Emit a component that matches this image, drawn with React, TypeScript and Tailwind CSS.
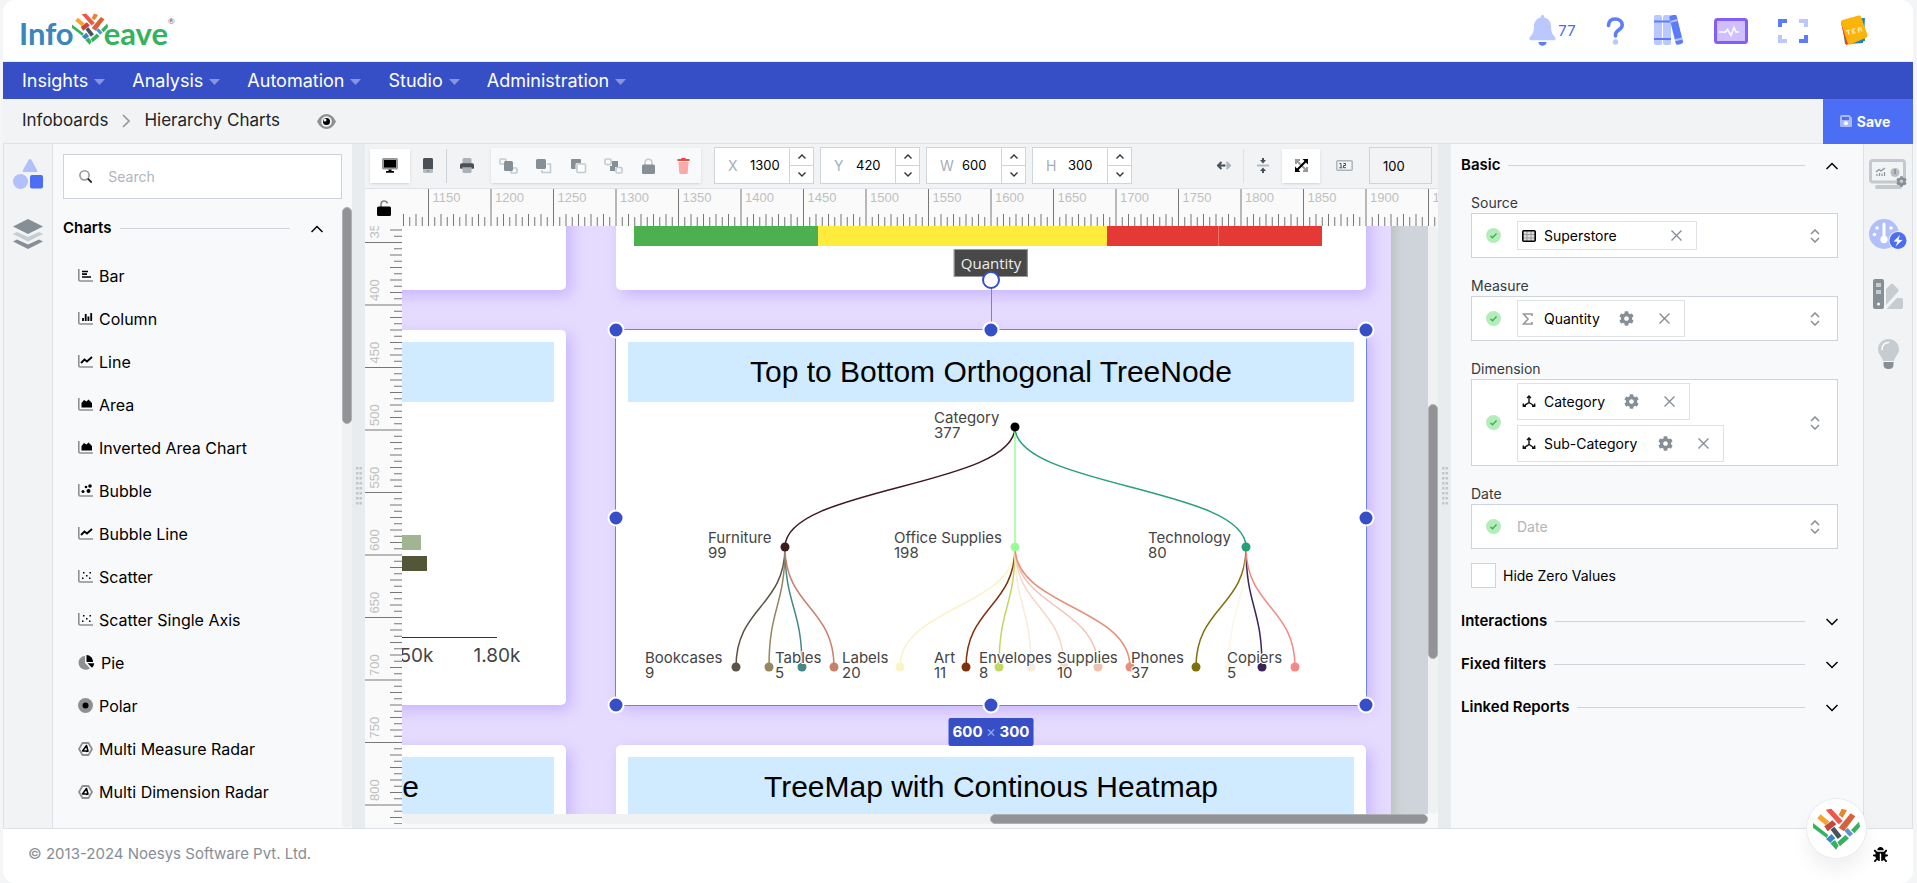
import type { ReactNode } from 'react'
import { FaBug, FaCog } from 'react-icons/fa'

const NAV_ITEMS = ['Insights', 'Analysis', 'Automation', 'Studio', 'Administration']

const CHART_TYPES = [
  { label: 'Bar', icon: 'bar' },
  { label: 'Column', icon: 'column' },
  { label: 'Line', icon: 'line' },
  { label: 'Area', icon: 'area' },
  { label: 'Inverted Area Chart', icon: 'area' },
  { label: 'Bubble', icon: 'bubble' },
  { label: 'Bubble Line', icon: 'line' },
  { label: 'Scatter', icon: 'scatter' },
  { label: 'Scatter Single Axis', icon: 'scatter' },
  { label: 'Pie', icon: 'pie' },
  { label: 'Polar', icon: 'polar' },
  { label: 'Multi Measure Radar', icon: 'radar' },
  { label: 'Multi Dimension Radar', icon: 'radar' },
]

// Canvas zoom and the board coordinate at the viewport's top left corner
const ZOOM = 1.25
const ORIGIN_X = 1128.8
const ORIGIN_Y = 336.8
const toX = (v: number) => Math.round((v - ORIGIN_X) * ZOOM)
const toY = (v: number) => Math.round((v - ORIGIN_Y) * ZOOM)

const range = (from: number, to: number, step: number) =>
  Array.from({ length: Math.floor((to - from) / step) + 1 }, (_, i) => from + i * step)

/* ---------- Logo ---------- */

function WeaveMark({ className }: { className: string }) {
  return (
    <svg viewBox="0 0 141 124" className={className} aria-hidden="true">
      <path fill="#f6a32b" d="M13 30 23 18 49 40 38 51z" />
      <path fill="#ef5549" d="M38 4 55 1 89 38 77 48z" />
      <path fill="#e08a2e" d="M86 1 102 6 89 28 77 20z" />
      <path fill="#d9613a" d="M113 15 127 24 93 69 77 58z" />
      <path fill="#c9453b" d="M34 54 58 36 70 48 44 69z" />
      <path fill="#47525f" d="M53 64 64 55 86 83 74 92z" />
      <path fill="#36b25f" d="M0 44 46 80 41 89 0 58z" />
      <path fill="#3f83c4" d="M39 92 56 77 67 90 52 103z" />
      <path fill="#36b25f" d="M52 105 66 95 77 112 69 124z" />
      <path fill="#36b25f" d="M73 102 97 80 108 90 81 114z" />
      <path fill="#5c93d1" d="M94 67 104 59 120 76 110 85z" />
      <path fill="#36b25f" d="M114 65 138 40 141 55 124 75z" />
    </svg>
  )
}

function Logo() {
  return (
    <a href="#" className="flex items-start font-['Lato'] text-[31px] leading-[34px] font-bold">
      <span className="mt-1 text-[#3a87bd]">Info</span>
      <WeaveMark className="-mr-1 -ml-0.5 h-[34px] w-9" />
      <span className="mt-1 text-[#36b25f]">eave</span>
      <span className="mt-1 text-[8px] leading-[10px] font-normal text-[#555]">®</span>
    </a>
  )
}

/* ---------- Header icons ---------- */

function HeaderIcons() {
  return (
    <div className="flex items-center">
      <button className="flex items-center gap-[2px]" aria-label="Notifications">
        <svg width="27" height="31" viewBox="0 0 27 31">
          <path
            fill="#bac8ff"
            d="M13.500 0c1 0 1.700.7 1.700 1.700v.8c4 .8 6.800 4.200 6.800 8.500 0 6 1.500 8.500 4 11 1.300 1.300.5 3.300-1.300 3.300H2.300C.5 25.300-.3 23.300 1 22c2.500-2.500 4-5 4-11 0-4.300 2.800-7.700 6.800-8.500v-.8c0-1 .7-1.700 1.700-1.700z"
          />
          <path fill="#5c7cfa" d="M9.500 27h8c0 2.200-1.800 3.800-4 3.800s-4-1.600-4-3.800z" />
        </svg>
        <span className="w-[18px] text-[15px] leading-5 text-[#4c6ef5]">77</span>
      </button>
      <button className="ml-7" aria-label="Help">
        <svg width="22" height="28" viewBox="0 0 22 28" fill="none">
          <path
            d="M4.500 8.500C4.500 4.500 7 2 11 2s7.200 2.500 7.200 6c0 5-6.700 5-6.700 9.500v1.500"
            stroke="#5c7cfa"
            strokeWidth="3.600"
            strokeLinecap="round"
          />
          <circle cx="11.500" cy="25" r="2.700" fill="#bac8ff" />
        </svg>
      </button>
      <button className="ml-7" aria-label="Library">
        <svg width="31" height="31" viewBox="0 0 31 31">
          <rect width="8" height="30" rx="2" fill="#bac8ff" />
          <rect x="9" width="8" height="30" rx="2" fill="#bac8ff" />
          <path d="M0 5.500h17v2H0zM0 23h17v2H0z" fill="#5c7cfa" />
          <g transform="rotate(-14 21 15)">
            <rect x="18.500" y="0" width="7.500" height="30" rx="2" fill="#5c7cfa" />
            <path d="M18.500 5h7.500v2h-7.500zM18.500 24h7.500v2h-7.500z" fill="#bac8ff" />
          </g>
        </svg>
      </button>
      <button className="ml-[29px]" aria-label="Monitor">
        <svg width="34" height="26" viewBox="0 0 34 26" fill="none">
          <rect x="1.500" y="1.500" width="31" height="23" rx="2" fill="#d0bfff" stroke="#845ef7" strokeWidth="3" />
          <path d="M5 14h6.500l2-2.500 3.500 6 3-8 2 4.500h3" stroke="#fff" strokeWidth="1.600" />
        </svg>
      </button>
      <button className="ml-[30px]" aria-label="Full screen">
        <svg width="30" height="24" viewBox="0 0 30 24" fill="none" strokeWidth="4">
          <path d="M2 8V2h7" stroke="#5c7cfa" />
          <path d="M21 2h7v6" stroke="#bac8ff" />
          <path d="M2 16v6h7" stroke="#bac8ff" />
          <path d="M21 22h7v-6" stroke="#5c7cfa" />
        </svg>
      </button>
      <button className="ml-8" aria-label="Profile">
        <svg width="28" height="31" viewBox="0 0 28 31">
          <path d="M2 6 24 3l1 23-20 3z" fill="#1c9c5b" />
          <path d="M8 6 25 3l-2 25-14 1z" fill="#1e7fc2" />
          <path d="M1 8 4 6l8 22-6 2z" fill="#e2452f" />
          <path d="M1 7.500Q.5 5.500 2.500 5L18.500.5q2-.5 2.500 1.200L27.500 20q.5 2-1.500 2.800L10.500 29.500q-2 .7-2.800-1.300z" fill="#fbb40a" />
          <path d="m6 16 4-1m-2 .5 1 4m3-5 1 4m-1-4 3-1m-2.500 3 2-.5m-1.500 2.500 3-1m2-4 1 4m-1-4 3-1 1 4m-4-1 3-1" stroke="#fde9b4" strokeWidth="1.200" fill="none" />
        </svg>
      </button>
    </div>
  )
}

/* ---------- Small shared icons ---------- */

function Chevron({ up = false }: { up?: boolean }) {
  return (
    <svg width="12" height="8" viewBox="0 0 12 8" fill="none" stroke="#000" strokeWidth="1.500">
      <path d={up ? 'M.5 7 6 1.500 11.500 7' : 'M.5 1 6 6.500 11.500 1'} />
    </svg>
  )
}

function ChartIcon({ kind }: { kind: string }) {
  if (kind === 'pie') {
    return (
      <svg width="17" height="15" viewBox="0 0 17 15">
        <path d="M7 .8V8l5 5.200A7 7 0 1 1 7 .8z" fill="#909090" />
        <path d="M8.500 0A7 7 0 0 1 15.200 7H8.500z" />
        <path d="M9.500 8.300h6.700a7 7 0 0 1-2.200 4.500z" />
      </svg>
    )
  }
  if (kind === 'polar') {
    return (
      <svg width="15" height="15" viewBox="0 0 15 15">
        <circle cx="7.500" cy="7.500" r="7.500" fill="#909090" />
        <circle cx="7.500" cy="7.500" r="3" />
      </svg>
    )
  }
  if (kind === 'radar') {
    return (
      <svg width="15" height="14" viewBox="0 0 15 14" fill="none">
        <path d="M4.500 1h6L14 7l-3.500 6h-6L1 7z" stroke="#909090" strokeWidth="1.800" strokeLinejoin="round" />
        <path d="M8.500 3.500 4.500 9h5.500zM8 9.500l2.500-.5" stroke="#000" strokeWidth="1.500" strokeLinejoin="round" />
      </svg>
    )
  }
  return (
    <svg width="15" height="13" viewBox="0 0 15 13" fill="none">
      <path d="M.8 0v10.500q0 1.500 1.500 1.500H15" stroke="#909090" strokeWidth="1.600" />
      {kind === 'bar' && <path d="M4 2.500h6M4 5.200h5M4 8h9" stroke="#000" strokeWidth="1.700" />}
      {kind === 'column' && <path d="M5 9V6M7.700 9V2M10.400 9V4.500M13.200 9V1" stroke="#000" strokeWidth="1.800" />}
      {kind === 'line' && <path d="m3 8 3.500-3.500 2.500 2L14 2" stroke="#000" strokeWidth="1.800" />}
      {kind === 'area' && <path d="M3.500 9.500V5L6 2l2.500 1.500 2-2L14 5v4.500z" fill="#000" />}
      {kind === 'bubble' && (
        <g fill="#000">
          <circle cx="8" cy="3" r="1.300" />
          <circle cx="12" cy="2" r="1.800" />
          <circle cx="5" cy="7.500" r="1.500" />
          <circle cx="10.500" cy="7" r="2" />
        </g>
      )}
      {kind === 'scatter' && (
        <path d="M5 2h1.500v1.500H5zM11.500 2H13v1.500h-1.500zM8 5h1.500v1.500H8zM4 7.500h1.500V9H4zM11 7.500h1.500V9H11z" fill="#000" />
      )}
    </svg>
  )
}

function SectionHeader({ title, open = false }: { title: string; open?: boolean }) {
  return (
    <button className="flex h-[43px] w-full items-center text-left">
      <span className="text-[15px] font-semibold">{title}</span>
      <span className="ml-2 mr-[21px] h-px flex-1 bg-[#ced4da]" />
      <Chevron up={open} />
    </button>
  )
}

function Grip() {
  return (
    <svg width="6" height="38" viewBox="0 0 6 38" fill="#c3c7cb">
      {range(0, 35, 5).map((y) => (
        <path key={y} d={`M0 ${y}h2.500v2.500h-2.500zM3.500 ${y}h2.500v2.500h-2.500z`} />
      ))}
    </svg>
  )
}

/* ---------- Left side ---------- */

function LeftRail() {
  return (
    <nav className="flex w-[50px] shrink-0 flex-col items-center gap-[30px] border-x border-[#dee2e6] bg-[#f1f3f5] pt-[15px]">
      <button aria-label="Components">
        <svg width="30" height="30" viewBox="0 0 30 30">
          <path d="M17 0q1 0 1.500 1L24 11q1 2-1 2H11q-2 0-1-2l5.500-10Q16 0 17 0z" fill="#b1bffb" />
          <circle cx="7.500" cy="22.500" r="7.500" fill="#b1bffb" />
          <rect x="17" y="16" width="13" height="13.500" rx="2" fill="#4c6ef5" />
        </svg>
      </button>
      <button aria-label="Layers">
        <svg width="30" height="30" viewBox="0 0 30 30">
          <path d="M15 0 30 7.500 15 15 0 7.500z" fill="#868e96" />
          <path d="m0 15 4-2 11 5 11-5 4 2-15 7.500z" fill="#c7ccd1" />
          <path d="m0 22.500 4-2 11 5 11-5 4 2L15 30z" fill="#868e96" />
        </svg>
      </button>
    </nav>
  )
}

function ChartPalette() {
  return (
    <aside className="flex w-[299px] shrink-0 flex-col bg-[#f8f9fb] pl-[10px]">
      <label className="mt-[10px] mr-[10px] flex h-[45px] shrink-0 items-center border border-[#ced4da] bg-white pl-[15px]">
        <svg width="15" height="15" viewBox="0 0 15 15" fill="none">
          <circle cx="6.200" cy="6.200" r="5.200" stroke="#999" strokeWidth="1.800" />
          <path d="m10 10 4.300 4.300" stroke="#222" strokeWidth="2" />
        </svg>
        <input
          type="search"
          placeholder="Search"
          aria-label="Search components"
          className="ml-4 w-full text-[14px] outline-none placeholder:text-[#adb5bd]"
        />
      </label>
      <div className="mt-2 flex min-h-0 flex-1">
        <div className="min-w-0 flex-1 overflow-hidden">
          <div className="pr-[19px]">
            <SectionHeader title="Charts" open />
          </div>
          <ul className="pt-1 pl-[15px]">
            {CHART_TYPES.map((chart) => (
              <li key={chart.label} className="flex h-[43px] items-center gap-[6px] text-[16px]">
                <ChartIcon kind={chart.icon} />
                {chart.label}
              </li>
            ))}
          </ul>
        </div>
        <div className="w-[10px] rounded-full bg-[#f0f1f2]">
          <div className="h-[217px] rounded-full border border-[#b0b1b3] bg-[#929396]" />
        </div>
      </div>
    </aside>
  )
}

function Splitter() {
  return (
    <div className="flex w-[13px] shrink-0 items-center justify-center bg-[#e9ecef]">
      <Grip />
    </div>
  )
}

/* ---------- Toolbar ---------- */

function NumberField({ label, value }: { label: string; value: string }) {
  return (
    <div className="flex h-[37px] w-[100px] shrink-0 border border-[#ced4da] bg-white">
      <label className="flex w-[75px] items-center border-r border-[#ced4da] pl-[13px]">
        <span className="w-[22px] text-[14px] text-[#a5afb9]">{label}</span>
        <input defaultValue={value} className="w-9 text-[13px] outline-none" />
      </label>
      <div className="flex flex-1 flex-col">
        <button className="flex flex-1 items-center justify-center border-b border-[#ced4da]" aria-label={`Increase ${label}`}>
          <svg width="8" height="5" viewBox="0 0 8 5" fill="none" stroke="#333" strokeWidth="1.400"><path d="m.5 4.500 3.500-3.500 3.500 3.500" /></svg>
        </button>
        <button className="flex flex-1 items-center justify-center" aria-label={`Decrease ${label}`}>
          <svg width="8" height="5" viewBox="0 0 8 5" fill="none" stroke="#333" strokeWidth="1.400"><path d="m.5.5 3.500 3.500L7.500.5" /></svg>
        </button>
      </div>
    </div>
  )
}

function ArrangeIcon({ kind }: { kind: string }) {
  const soft = { fill: 'none', stroke: '#c5cacf', strokeWidth: 1.6 }
  return (
    <svg width="19" height="16" viewBox="0 0 19 16">
      {kind === 'front' && (
        <>
          <rect x="1" y="1" width="6" height="5" rx="1" {...soft} />
          <rect x="12" y="10" width="6" height="5" rx="1" {...soft} />
          <rect x="5" y="3" width="9" height="10" rx="1.500" fill="#868e96" />
        </>
      )}
      {kind === 'forward' && (
        <>
          <path d="M13 6h3.500v8.500H8V12" {...soft} />
          <rect x="2" y="1" width="10" height="10" rx="1.500" fill="#868e96" />
        </>
      )}
      {kind === 'backward' && (
        <>
          <path d="M3 1h8q1 0 1 1v3H8q-1.500 0-1.500 1.500V11H3q-1 0-1-1V2q0-1 1-1z" fill="#868e96" />
          <rect x="8" y="6" width="8.500" height="8.500" rx="1" fill="#fff" stroke="#c5cacf" strokeWidth="1.600" />
        </>
      )}
      {kind === 'back' && (
        <>
          <path d="M8 3h6v6h-3v4H6V8h2z" fill="#868e96" />
          <rect x="1" y="1" width="6" height="5.500" rx="1" {...soft} />
          <rect x="12" y="9.500" width="6" height="5.500" rx="1" {...soft} />
        </>
      )}
      {kind === 'lock' && (
        <>
          <path d="M6 7V5q0-3.700 3.500-3.700T13 5v2" {...soft} />
          <rect x="3" y="6.500" width="13" height="9.500" rx="1.500" fill="#868e96" />
        </>
      )}
      {kind === 'delete' && (
        <>
          <path d="M4.500 4h10l-.8 11q0 1-1 1H6.300q-1 0-1-1z" fill="#ffa8a8" />
          <path d="M3.500 1H7l.7-1h3.600l.7 1h3.500v2h-12z" fill="#f0483e" />
        </>
      )}
    </svg>
  )
}

const ARRANGE = ['front', 'forward', 'backward', 'back', 'lock', 'delete']

function Toolbar() {
  return (
    <div className="flex h-[45px] shrink-0 items-center border-b border-[#dee2e6] bg-[#f1f3f5] pr-[6px] pb-px pl-[5px]">
      <button className="flex h-[34px] w-10 items-center justify-center bg-white shadow" aria-label="Desktop">
        <svg width="16" height="15" viewBox="0 0 16 15">
          <rect width="16" height="11.500" rx="1.500" fill="#999" />
          <path d="M2 2h12v7.500H2zM6.500 11.500h3V13H12v1.700H4V13h2.500z" />
        </svg>
      </button>
      <button className="flex w-[36px] justify-center" aria-label="Mobile">
        <svg width="10" height="15" viewBox="0 0 10 15">
          <rect width="10" height="15" rx="1.500" fill="#b5babf" />
          <path d="M0 1.500Q0 0 1.500 0h7Q10 0 10 1.500V11H0z" fill="#495057" />
          <circle cx="5" cy="13" r=".8" fill="#777" />
        </svg>
      </button>
      <span className="h-[34px] w-px bg-[#ced4da]" />
      <button className="flex w-10 justify-center" aria-label="Print">
        <svg width="14" height="15" viewBox="0 0 14 15">
          <rect x="2.500" width="9" height="15" rx="1.500" fill="#adb0b5" />
          <path d="M0 7q0-1.800 1.800-1.800h10.400Q14 5.200 14 7v3q0 .8-.8.8h-1.700V9.200h-9v1.600H.8Q0 10.800 0 10z" fill="#495057" />
        </svg>
      </button>
      <div className="ml-1 flex h-[35px] bg-[#f8f9fa] shadow-sm">
        {ARRANGE.map((kind) => (
          <button key={kind} className="flex w-[35px] items-center justify-center" aria-label={kind}>
            <ArrangeIcon kind={kind} />
          </button>
        ))}
      </div>
      <div className="ml-[13px] flex gap-[6px]">
        <NumberField label="X" value="1300" />
        <NumberField label="Y" value="420" />
        <NumberField label="W" value="600" />
        <NumberField label="H" value="300" />
      </div>
      <div className="ml-auto flex items-center">
        <button className="flex w-[38px] justify-center" aria-label="Fit width">
          <svg width="14" height="9" viewBox="0 0 14 9" fill="none" strokeWidth="2">
            <path d="M6 4.500h7M9.500 1 13 4.500 9.500 8" stroke="#adb5bd" />
            <path d="M8 4.500H1.500M4.500 1 1 4.500 4.500 8" stroke="#495057" />
          </svg>
        </button>
        <span className="h-[34px] w-px bg-[#dee2e6]" />
        <button className="flex w-[38px] justify-center" aria-label="Center vertically">
          <svg width="12" height="15" viewBox="0 0 12 15" fill="none">
            <path d="M0 7.500h12" stroke="#adb5bd" strokeWidth="1.800" />
            <path d="M6 0v3M6 15v-3" stroke="#495057" strokeWidth="2" />
            <path d="M3 2h6L6 5.500zM3 13h6L6 9.500z" fill="#495057" />
          </svg>
        </button>
        <button className="flex h-[34px] w-[38px] items-center justify-center bg-white shadow" aria-label="Fit page">
          <svg width="13" height="13" viewBox="0 0 13 13" fill="none">
            <path d="M1 5V1h4M12 8v4H8M1 1l11 11" stroke="#999" strokeWidth="2" />
            <path d="m2 11 9-9" stroke="#000" strokeWidth="2.200" />
            <path d="M7.500 0H13v5.500zM0 7.500V13h5.500z" fill="#000" />
          </svg>
        </button>
        <button className="flex w-[49px] justify-center" aria-label="Show numbers">
          <svg width="17" height="11" viewBox="0 0 17 11">
            <rect x=".8" y=".8" width="15.400" height="9.400" rx="1" fill="none" stroke="#adb5bd" strokeWidth="1.500" />
            <path d="M3.500 3.500H5v4M3.300 7.800h3M7.500 3.500h2v2h-2v2.200h2.500" fill="none" stroke="#495057" />
          </svg>
        </button>
        <input
          defaultValue="100"
          aria-label="Zoom"
          className="h-[37px] w-[63px] border border-[#ced4da] pl-[13px] text-[13px] outline-none"
        />
      </div>
    </div>
  )
}

/* ---------- Canvas ---------- */

function HorizontalRuler() {
  return (
    <svg className="h-[37px] min-w-0 flex-1 bg-[#fafafa]" fontFamily="Liberation Sans" fontSize="13">
      {range(1130, 1955, 5).map((v) => {
        const x = (v - ORIGIN_X) * ZOOM
        const top = v % 50 === 0 ? 0 : v % 10 === 0 ? 25 : 28
        return <path key={v} d={`M${x} ${top}V37`} stroke="#777" />
      })}
      {range(1150, 1950, 50).map((v) => (
        <text key={v} x={(v - ORIGIN_X) * ZOOM + 4} y="13" fill="#bfbfbf">{v}</text>
      ))}
    </svg>
  )
}

function VerticalRuler() {
  return (
    <svg className="h-full w-[37px] shrink-0 bg-[#fafafa]" fontFamily="Liberation Sans" fontSize="13">
      {range(340, 815, 5).map((v) => {
        const y = (v - ORIGIN_Y) * ZOOM
        const left = v % 50 === 0 ? 0 : v % 10 === 0 ? 25 : 29
        return <path key={v} d={`M${left} ${y}H37`} stroke="#777" />
      })}
      {range(350, 800, 50).map((v) => {
        const y = (v - ORIGIN_Y) * ZOOM - 4
        return (
          <text key={v} x="14" y={y} transform={`rotate(-90 14 ${y})`} fill="#bfbfbf">{v}</text>
        )
      })}
    </svg>
  )
}

type TreeNode = { x: number; color: string; parent?: number }

const BRANCHES: TreeNode[] = [
  { x: 169, color: '#3d1a20' },
  { x: 399, color: '#98ff98' },
  { x: 630, color: '#26a078' },
]

const LEAVES: TreeNode[] = [
  { x: 120, parent: 169, color: '#5b5348' },
  { x: 153, parent: 169, color: '#968660' },
  { x: 186, parent: 169, color: '#458784' },
  { x: 218, parent: 169, color: '#c8806a' },
  { x: 284, parent: 399, color: '#fbf3c8' },
  { x: 317, parent: 399, color: '#fffef6' },
  { x: 350, parent: 399, color: '#80300c' },
  { x: 383, parent: 399, color: '#c3d65f' },
  { x: 415, parent: 399, color: '#f8ebdf' },
  { x: 448, parent: 399, color: '#f5d6c8' },
  { x: 482, parent: 399, color: '#f0c0b0' },
  { x: 514, parent: 399, color: '#e69078' },
  { x: 580, parent: 630, color: '#80700c' },
  { x: 613, parent: 630, color: '#fbf6ea' },
  { x: 646, parent: 630, color: '#3d2459' },
  { x: 679, parent: 630, color: '#f58884' },
]

const TREE_LABELS: [number, number, string, number][] = [
  [318, 93, 'Category', 377],
  [92, 213, 'Furniture', 99],
  [278, 213, 'Office Supplies', 198],
  [532, 213, 'Technology', 80],
  [29, 333, 'Bookcases', 9],
  [159, 333, 'Tables', 5],
  [226, 333, 'Labels', 20],
  [318, 333, 'Art', 11],
  [363, 333, 'Envelopes', 8],
  [441, 333, 'Supplies', 10],
  [515, 333, 'Phones', 37],
  [611, 333, 'Copiers', 5],
]

const link = (x0: number, y0: number, x1: number, y1: number) => {
  const mid = (y0 + y1) / 2
  return `M${x0} ${y0}C${x0} ${mid} ${x1} ${mid} ${x1} ${y1}`
}

function TreeChart() {
  return (
    <svg viewBox="0 0 750 375" className="absolute inset-0 h-full w-full" fill="none" strokeWidth="1.500">
      {BRANCHES.map((node) => (
        <path key={node.x} d={link(399, 97, node.x, 217)} stroke={node.color} />
      ))}
      {LEAVES.map((node) => (
        <path key={node.x} d={link(node.parent ?? 0, 217, node.x, 337)} stroke={node.color} />
      ))}
      <circle cx="399" cy="97" r="4.500" fill="#000" />
      {BRANCHES.map((node) => (
        <circle key={node.x} cx={node.x} cy="217" r="4.500" fill={node.color} />
      ))}
      {LEAVES.map((node) => (
        <circle key={node.x} cx={node.x} cy="337" r="4.500" fill={node.color} />
      ))}
      <g fontFamily="Inter" fontSize="15" fill="#444" stroke="#fff" strokeWidth="2" paintOrder="stroke">
        {TREE_LABELS.map(([x, y, name, value]) => (
          <text key={name} x={x} y={y}>
            {name}
            <tspan x={x} dy="15">{value}</tspan>
          </text>
        ))}
      </g>
    </svg>
  )
}

function Card({ x, y, children }: { x: number; y: number; children?: ReactNode }) {
  return (
    <section
      className="absolute rounded-[5px] bg-white p-3 shadow-[5px_5px_15px_#c8b4ff]"
      style={{ left: toX(x), top: toY(y), width: 600 * ZOOM, height: 300 * ZOOM }}
    >
      {children}
    </section>
  )
}

function CardTitle({ children, className = 'justify-center' }: { children?: ReactNode; className?: string }) {
  return (
    <h2 className={`flex h-[60px] items-center bg-[#d0ebff] pb-0.5 font-['Liberation_Sans'] text-[30px] ${className}`}>
      {children}
    </h2>
  )
}

const HANDLES = [
  'left-0 top-0', 'left-1/2 top-0', 'left-full top-0',
  'left-0 top-1/2', 'left-full top-1/2',
  'left-0 top-full', 'left-1/2 top-full', 'left-full top-full',
]

function Selection() {
  return (
    <div
      className="absolute outline outline-[#7083dc]"
      style={{ left: toX(1300), top: toY(420), width: 600 * ZOOM, height: 300 * ZOOM }}
    >
      <span className="absolute bottom-full left-1/2 mb-[53px] -translate-x-1/2 border border-[#999] bg-[#484848] px-[6px] font-['Open_Sans'] text-[15px] leading-[26px] font-medium text-[#eee]">
        Quantity
      </span>
      <span className="absolute bottom-full left-1/2 h-[50px] w-px bg-[#7083dc]" />
      <span className="absolute bottom-full left-1/2 mb-[41px] size-[18px] -translate-x-1/2 rounded-full border-2 border-[#364fc7] bg-white" />
      {HANDLES.map((place) => (
        <span
          key={place}
          className={`absolute size-[17px] -translate-x-1/2 -translate-y-1/2 rounded-full border-2 border-white bg-[#364fc7] ${place}`}
        />
      ))}
      <span className="absolute top-full left-1/2 mt-[13px] -translate-x-1/2 rounded-[2px] bg-[#364fc7] px-1 text-[15px] leading-7 font-bold whitespace-nowrap text-white">
        600 <span className="font-normal text-[#91a7ff]">×</span> 300
      </span>
    </div>
  )
}

function Canvas() {
  return (
    <main className="flex min-w-0 flex-1 flex-col bg-[#f8f9fa]">
      <Toolbar />
      <div className="flex shrink-0">
        <button className="flex h-[37px] w-[37px] items-center justify-center bg-[#fafafa]" aria-label="Unlock guides">
          <svg width="14" height="16" viewBox="0 0 14 16">
            <path d="M4 7V4.500Q4 1 7 1t3.300 2.500" fill="none" stroke="#888" strokeWidth="1.700" />
            <rect x="0" y="6.500" width="14" height="9.500" rx="1.500" />
          </svg>
        </button>
        <HorizontalRuler />
      </div>
      <div className="flex min-h-0 flex-1">
        <div className="h-full overflow-hidden pb-1">
          <VerticalRuler />
        </div>
        <div className="flex min-w-0 flex-1 flex-col">
          <div className="flex min-h-0 flex-1">
            <div className="relative min-w-0 flex-1 overflow-hidden bg-[#ced4da]">
              {/* Board page */}
              <div
                className="absolute bg-[#e5dbff] shadow-[0_0_12px_#adb5ad]"
                style={{ left: toX(0), top: toY(0), width: 1920 * ZOOM, height: 1400 * ZOOM }}
              />
              <Card x={660} y={88} />
              <Card x={1300} y={88}>
                <svg viewBox="0 0 688 60" className="absolute bottom-[44px] left-[18px] h-[60px] w-[688px]">
                  <rect width="184" height="60" fill="#4caf50" />
                  <rect x="184" width="289" height="60" fill="#ffeb3b" />
                  <rect x="473" width="215" height="60" fill="#e53935" />
                  <path d="M584.500 0v60" stroke="#ef6f6c" />
                </svg>
              </Card>
              <Card x={660} y={420}>
                <CardTitle />
                <svg viewBox="0 0 750 375" className="absolute inset-0 h-full w-full" fontFamily="Inter" fontSize="19" fill="#444">
                  <rect x="400" y="205" width="205" height="15" fill="#a1b592" />
                  <rect x="400" y="226" width="211" height="15" fill="#535738" />
                  <path d="M400 307.500H681" stroke="#333" />
                  <text x="594" y="332" textAnchor="middle">1.50k</text>
                  <text x="681" y="332" textAnchor="middle">1.80k</text>
                </svg>
              </Card>
              <Card x={1300} y={420}>
                <CardTitle>Top to Bottom Orthogonal TreeNode</CardTitle>
                <TreeChart />
              </Card>
              <Card x={660} y={752}>
                <CardTitle className="justify-end pr-[135px]">e</CardTitle>
              </Card>
              <Card x={1300} y={752}>
                <CardTitle>TreeMap with Continous Heatmap</CardTitle>
              </Card>
              <Selection />
            </div>
            <div className="flex w-[10px] flex-col rounded-full bg-[#f0f1f2] pt-[178px]">
              <div className="h-[255px] rounded-full border border-[#b0b1b3] bg-[#929396]" />
            </div>
          </div>
          <div className="mr-[10px] mb-1 flex h-[10px] justify-end rounded-full bg-[#f0f1f2]">
            <div className="w-[438px] rounded-full border border-[#b0b1b3] bg-[#929396]" />
          </div>
        </div>
      </div>
    </main>
  )
}

/* ---------- Properties panel ---------- */

function CheckDot() {
  return (
    <svg width="15" height="15" viewBox="0 0 15 15" className="shrink-0" fill="none">
      <circle cx="7.500" cy="7.500" r="7.500" fill="#b5ecbc" />
      <path d="m4.500 7.700 2 2 4-4.200" stroke="#37b24d" strokeWidth="1.300" />
    </svg>
  )
}

function UpDown() {
  return (
    <svg width="10" height="14" viewBox="0 0 10 14" fill="none" stroke="#868e96" strokeWidth="1.500">
      <path d="m1 5 4-4 4 4M1 9l4 4 4-4" />
    </svg>
  )
}

function TagIcon({ kind }: { kind: string }) {
  if (kind === 'table') {
    return (
      <svg width="14" height="12" viewBox="0 0 14 12" fill="none">
        <path d="M1 1h12v10H1z" fill="#ddd" />
        <path d="M5 1v10M9 1v10M1 4.500h12M1 8h12" stroke="#999" />
        <rect x=".8" y=".8" width="12.400" height="10.400" rx="1" stroke="#000" strokeWidth="1.600" />
      </svg>
    )
  }
  if (kind === 'measure') {
    return (
      <svg width="14" height="12" viewBox="0 0 14 12" fill="none" stroke="#999" strokeWidth="1.700">
        <path d="M10 3V1H1.500L6 6l-4.500 5H10V9" />
      </svg>
    )
  }
  return (
    <svg width="14" height="13" viewBox="0 0 14 13" fill="none" stroke="#111" strokeWidth="1.400">
      <path d="M7 1.500v6L1.500 11M7 7.500l5.500 3.500M5 3l2-2 2 2M1.300 8.500V11.300H4M12.700 8.500v2.800H10" />
    </svg>
  )
}

function Tag({ icon, label, className }: { icon: string; label: string; className: string }) {
  return (
    <span className={`flex items-center border border-[#dee2e6] bg-white pl-1 text-[14px] ${className}`}>
      <TagIcon kind={icon} />
      <span className="ml-2">{label}</span>
      {icon !== 'table' && (
        <button className="ml-auto text-[#868e96]" aria-label={`Configure ${label}`}>
          <FaCog size={15} />
        </button>
      )}
      <button className={icon === 'table' ? 'mr-[14px] ml-auto' : 'mr-[14px] ml-[25px]'} aria-label={`Remove ${label}`}>
        <svg width="11" height="11" viewBox="0 0 11 11" stroke="#868e96" strokeWidth="1.400">
          <path d="m.5.500 10 10M10.500.500l-10 10" />
        </svg>
      </button>
    </span>
  )
}

function TagField({ id, label, children }: { id: string; label: string; children: ReactNode }) {
  return (
    <div className="mb-[17px] ml-[10px]">
      <label htmlFor={id} className="block text-[14px] leading-[21px] text-[#343a40]">{label}</label>
      <div className="flex min-h-[45px] items-center border border-[#ced4da] bg-white py-[3px] pr-[17px] pl-[14px]">
        <CheckDot />
        <div className="ml-4 flex flex-1 flex-col items-start gap-[5px]">{children}</div>
        <button id={id} aria-haspopup="listbox">
          <UpDown />
        </button>
      </div>
    </div>
  )
}

function PropertiesPanel() {
  return (
    <aside className="w-[412px] shrink-0 bg-[#f8f9fb] pr-[25px] pl-[10px]">
      <SectionHeader title="Basic" open />
      <div className="pt-[5px]">
        <TagField id="source" label="Source">
          <Tag icon="table" label="Superstore" className="h-[29px] w-[180px]" />
        </TagField>
        <TagField id="measure" label="Measure">
          <Tag icon="measure" label="Quantity" className="h-[37px] w-[168px]" />
        </TagField>
        <TagField id="dimension" label="Dimension">
          <Tag icon="dimension" label="Category" className="h-[37px] w-[173px]" />
          <Tag icon="dimension" label="Sub-Category" className="h-[37px] w-[207px]" />
        </TagField>
        <div className="ml-[10px]">
          <label htmlFor="date" className="block text-[14px] leading-[21px] text-[#343a40]">Date</label>
          <div className="flex h-[45px] items-center border border-[#ced4da] bg-white pr-[17px] pl-[14px]">
            <CheckDot />
            <select id="date" className="ml-4 flex-1 appearance-none text-[14px] text-[#adb5bd] outline-none">
              <option>Date</option>
            </select>
            <UpDown />
          </div>
        </div>
        <label className="mt-[14px] mb-3 ml-[10px] flex items-center gap-[7px] text-[14px]">
          <input type="checkbox" className="size-[25px] appearance-none border border-[#ced4da] bg-white" />
          Hide Zero Values
        </label>
      </div>
      <SectionHeader title="Interactions" />
      <SectionHeader title="Fixed filters" />
      <SectionHeader title="Linked Reports" />
    </aside>
  )
}

function RightRail() {
  return (
    <nav className="flex w-[50px] shrink-0 flex-col items-center gap-[30px] border-x border-[#dee2e6] bg-[#f1f3f5] pt-[15px]">
      <button aria-label="Display settings">
        <svg width="38" height="30" viewBox="0 0 38 30" fill="none">
          <rect x="1.500" y="1.500" width="34" height="21.500" rx="2.500" stroke="#c3c9ce" strokeWidth="3" />
          <path d="M8 28h23" stroke="#c3c9ce" strokeWidth="4" strokeLinecap="round" />
          <path d="m7 13 3-2.500 2 1.500 4-3M8 17v-2M10.500 17v-3M13 17v-2.500M15.500 17v-4" stroke="#8b9299" strokeWidth="1.200" />
          <circle cx="26" cy="13.500" r="4.500" fill="#b8bec4" />
          <path d="M26 10v5" stroke="#868e96" strokeWidth="1.500" />
          <g transform="translate(27 17)"><FaCog size={11} color="#868e96" /></g>
        </svg>
      </button>
      <button aria-label="Data">
        <svg width="38" height="30" viewBox="0 0 38 30">
          <circle cx="15" cy="15" r="15" fill="#b1bffb" />
          <path d="M15 5v14" stroke="#fff" strokeWidth="3" strokeLinecap="round" />
          <circle cx="15" cy="20.500" r="3.700" fill="#fff" />
          <circle cx="8" cy="9" r="1.800" fill="#fff" />
          <circle cx="22" cy="9" r="1.800" fill="#fff" />
          <circle cx="5.500" cy="15.500" r="1.800" fill="#fff" />
          <circle cx="29" cy="21.500" r="9.500" fill="#f1f3f5" />
          <circle cx="29" cy="21.500" r="8.500" fill="#4c6ef5" />
          <path d="m31 16-6.500 6.500 4 .3-2 4.700 7-6.500-4-.3z" fill="#fff" />
        </svg>
      </button>
      <button aria-label="Style">
        <svg width="30" height="30" viewBox="0 0 30 30">
          <rect width="11" height="30" rx="2" fill="#868e96" />
          <path d="M3 4h5v4H3zM3 11h5v4H3z" fill="#c7ccd1" />
          <circle cx="5.500" cy="25" r="1.500" fill="#fff" />
          <path d="m13 10 4.500-4.500q1.500-1.300 3 0l4.500 4.500q1.300 1.300 0 2.700L13 26z" fill="#c7ccd1" />
          <path d="M13.500 30 24 19h4q2 0 2 2v7q0 2-2 2z" fill="#c7ccd1" />
        </svg>
      </button>
      <button aria-label="Hints">
        <svg width="21" height="30" viewBox="0 0 21 30">
          <path d="M10.500 0C16.500 0 21 4.500 21 10c0 5.500-4 7-5 12H5C4 17 0 15.500 0 10 0 4.500 4.500 0 10.500 0z" fill="#c7ccd1" />
          <path d="M4 10.500Q4 4 10.500 3.500" fill="none" stroke="#fff" strokeWidth="1.500" strokeLinecap="round" />
          <path d="M5.500 23h10v2.500q0 4.500-5 4.500t-5-4.500z" fill="#868e96" />
        </svg>
      </button>
    </nav>
  )
}

/* ---------- Page ---------- */

export default function App() {
  return (
    <div className="h-screen bg-[#f4f5f6] pr-1 pl-[3px] font-['Inter',sans-serif] text-black">
      <div className="flex h-full flex-col overflow-hidden rounded-[12px] bg-white">
        <header className="flex h-[62px] shrink-0 items-center justify-between border-b border-[#e9ecef] pr-[45px] pl-4">
          <Logo />
          <HeaderIcons />
        </header>

        <nav className="flex h-[37px] shrink-0 items-center gap-[27px] bg-[#364fc7] pl-[19px] text-[18px] text-white">
          {NAV_ITEMS.map((item) => (
            <a key={item} href="#" className="flex items-center gap-[6px]">
              {item}
              <svg width="11" height="6" viewBox="0 0 11 6" className="mt-[3px]">
                <path d="M0 0h11L5.500 6z" fill="#8695dd" />
              </svg>
            </a>
          ))}
        </nav>

        <div className="flex h-[45px] shrink-0 items-center border-b border-[#dee2e6] bg-[#f1f3f5] pl-[19px] text-[17px] text-[#212529]">
          <a href="#">Infoboards</a>
          <svg width="8" height="14" viewBox="0 0 8 14" className="mx-[14px]" fill="none" stroke="#999" strokeWidth="1.700">
            <path d="m1 1 6 6-6 6" />
          </svg>
          <span>Hierarchy Charts</span>
          <button className="ml-[37px]" aria-label="Preview">
            <svg width="19" height="15" viewBox="0 0 19 15">
              <path d="M0 7.500Q3.500 0 9.500 0T19 7.500Q15.500 15 9.500 15T0 7.500z" fill="#909090" />
              <circle cx="9.500" cy="7.500" r="5.300" fill="#f1f3f5" />
              <circle cx="9.500" cy="7.500" r="3.500" />
              <circle cx="8" cy="6" r="1.500" fill="#f1f3f5" />
            </svg>
          </button>
          <button className="ml-auto flex h-[45px] w-[90px] items-center justify-center gap-[5px] bg-[#4c6ef5] pr-1.5 text-[14px] font-bold text-white">
            <svg width="12" height="12" viewBox="0 0 12 12">
              <path d="M0 1.500Q0 0 1.500 0h7.700L12 2.800v7.700q0 1.500-1.500 1.500h-9Q0 12 0 10.500z" fill="#a9b9fb" />
              <path d="M2 2h7v3H2z" fill="#4c6ef5" />
              <circle cx="6" cy="8.300" r="2" fill="#fff" />
            </svg>
            Save
          </button>
        </div>

        <div className="flex min-h-0 flex-1">
          <LeftRail />
          <ChartPalette />
          <Splitter />
          <Canvas />
          <Splitter />
          <PropertiesPanel />
          <RightRail />
        </div>

        <footer className="relative flex h-[55px] shrink-0 items-center justify-between border-t border-[#dee2e6] pr-[25px] pb-1 pl-[25px] text-[#868e96]">
          <span className="text-[15px]">© 2013-2024 Noesys Software Pvt. Ltd.</span>
          <button
            className="absolute -top-[31px] right-[46px] flex size-[61px] items-center justify-center rounded-full border border-[#e9ecef] bg-white shadow-[0_12px_18px_rgba(0,0,0,0.06)]"
            aria-label="Assistant"
          >
            <WeaveMark className="h-[42px] w-[47px]" />
          </button>
          <button className="text-black" aria-label="Report a bug">
            <FaBug size={15} />
          </button>
        </footer>
      </div>
    </div>
  )
}
